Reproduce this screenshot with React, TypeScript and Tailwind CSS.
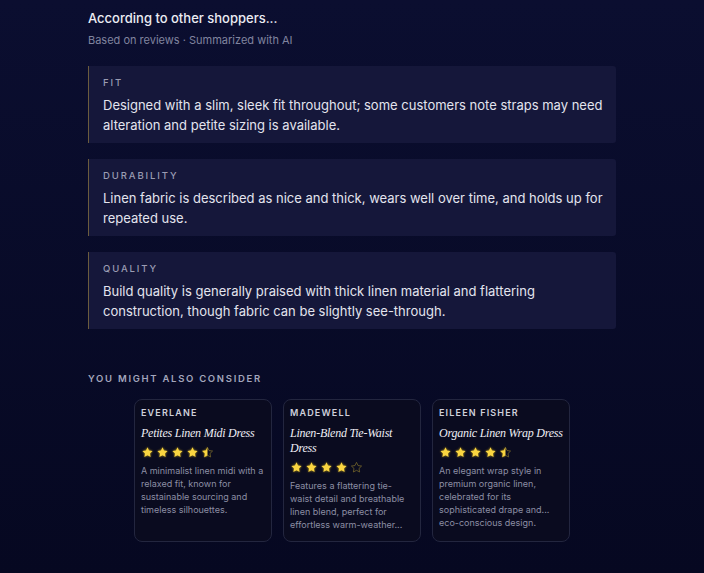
import React from 'react';

const STAR = 'M12 2.5l2.85 5.95 6.55.85-4.8 4.55 1.2 6.5L12 17.2l-5.8 3.15 1.2-6.5-4.8-4.55 6.55-.85L12 2.5z';

const insights = [
  {
    label: 'Fit',
    text: 'Designed with a slim, sleek fit throughout; some customers note straps may need alteration and petite sizing is available.',
  },
  {
    label: 'Durability',
    text: 'Linen fabric is described as nice and thick, wears well over time, and holds up for repeated use.',
  },
  {
    label: 'Quality',
    text: 'Build quality is generally praised with thick linen material and flattering construction, though fabric can be slightly see-through.',
  },
];

const products = [
  {
    brand: 'Everlane',
    name: 'Petites Linen Midi Dress',
    rating: 4.5,
    desc: 'A minimalist linen midi with a relaxed fit, known for sustainable sourcing and timeless silhouettes.',
  },
  {
    brand: 'Madewell',
    name: 'Linen-Blend Tie-Waist Dress',
    rating: 4,
    desc: 'Features a flattering tie-waist detail and breathable linen blend, perfect for effortless warm-weather...',
  },
  {
    brand: 'Eileen Fisher',
    name: 'Organic Linen Wrap Dress',
    rating: 4.5,
    desc: 'An elegant wrap style in premium organic linen, celebrated for its sophisticated drape and... eco-conscious design.',
  },
];

const Star = ({ fill }: { fill: 'full' | 'half' | 'empty' }) => (
  <svg viewBox="0 0 24 24" className="w-[13px] h-[13px] overflow-visible">
    <defs>
      <clipPath id="half-clip">
        <rect x="0" y="0" width="12" height="24" />
      </clipPath>
    </defs>
    {fill === 'full' ? (
      <path d={STAR} fill="#fad541" className="drop-shadow-[0_0_2px_rgba(250,204,21,0.75)]" />
    ) : (
      <>
        <path d={STAR} fill="none" stroke="#7a6a2a" strokeWidth="1.4" />
        {fill === 'half' && (
          <path d={STAR} fill="#fad541" clipPath="url(#half-clip)" className="drop-shadow-[0_0_2px_rgba(250,204,21,0.75)]" />
        )}
      </>
    )}
  </svg>
);

const Stars = ({ rating }: { rating: number }) => (
  <div className="flex items-center gap-[2px] mt-[5px]">
    {[1, 2, 3, 4, 5].map(i => (
      <Star key={i} fill={rating >= i ? 'full' : rating >= i - 0.5 ? 'half' : 'empty'} />
    ))}
  </div>
);

export default function App() {
  return (
    <div
      className="min-h-[573px] w-full bg-gradient-to-b from-[#0b0e30] to-[#060821] text-[#e6e7ef]"
      style={{ fontFamily: 'Inter, "Noto Sans", sans-serif' }}
    >
      <div className="w-[528px] mx-auto pt-2 pb-8">
        {/* Header */}
        <h2 className="text-[13px] leading-5 font-medium text-[#ebecf3]">According to other shoppers...</h2>
        <p className="mt-1 text-[11px] leading-4 text-[#80849f]">Based on reviews · Summarized with AI</p>

        {/* Insight cards */}
        <div className="mt-[18px] flex flex-col gap-4">
          {insights.map(item => (
            <div
              key={item.label}
              className="bg-[#15173a] border-l border-[#6b5c3e] rounded-r-[3px] pl-[14px] pr-3 pt-[9px] pb-2"
            >
              <div className="text-[9.5px] leading-4 uppercase tracking-[0.2em] text-[#9a9cb2] font-medium">
                {item.label}
              </div>
              <p className="mt-1 text-[13px] leading-5 text-[#e3e4ee]">{item.text}</p>
            </div>
          ))}
        </div>

        {/* Suggestions */}
        <div className="mt-[42px] text-[9.5px] leading-4 uppercase tracking-[0.18em] font-semibold text-[#a3a6bc]">
          You might also consider
        </div>
        <div className="mt-3 flex justify-center gap-[11px]">
          {products.map(p => (
            <div
              key={p.brand}
              className="w-[138px] rounded-lg border border-[#23263f] bg-[#0a0b1f] px-1.5 pt-[6px] pb-[10px]"
            >
              <div className="text-[9px] leading-[14px] uppercase tracking-[0.13em] font-semibold text-[#cfd0dc]">
                {p.brand}
              </div>
              <div
                className="mt-[6px] text-[12px] leading-[15px] italic tracking-[-0.02em] text-[#eeeef4]"
                style={{ fontFamily: '"Liberation Serif", serif' }}
              >
                {p.name}
              </div>
              <Stars rating={p.rating} />
              <p className="mt-[5px] text-[9px] leading-[13px] text-[#8c8ea4]">{p.desc}</p>
            </div>
          ))}
        </div>
      </div>
    </div>
  );
}
